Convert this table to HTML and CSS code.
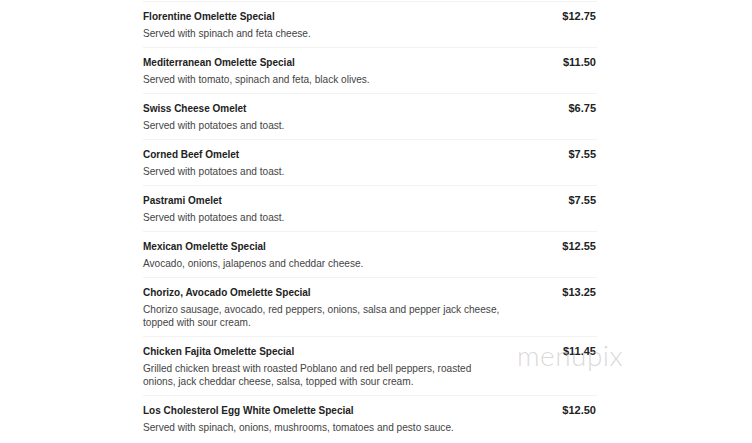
FILE: index.html
```html
<!DOCTYPE html>
<html>
<head>
<meta charset="utf-8">
<link rel="stylesheet" href="styles.css">
</head>
<body>
<div class="menu">
  <div class="item">
    <div class="row"><span class="name">Florentine Omelette Special</span><span class="price">$12.75</span></div>
    <div class="desc">Served with spinach and feta cheese.</div>
  </div>
  <div class="item">
    <div class="row"><span class="name">Mediterranean Omelette Special</span><span class="price">$11.50</span></div>
    <div class="desc">Served with tomato, spinach and feta, black olives.</div>
  </div>
  <div class="item">
    <div class="row"><span class="name">Swiss Cheese Omelet</span><span class="price">$6.75</span></div>
    <div class="desc">Served with potatoes and toast.</div>
  </div>
  <div class="item">
    <div class="row"><span class="name">Corned Beef Omelet</span><span class="price">$7.55</span></div>
    <div class="desc">Served with potatoes and toast.</div>
  </div>
  <div class="item">
    <div class="row"><span class="name">Pastrami Omelet</span><span class="price">$7.55</span></div>
    <div class="desc">Served with potatoes and toast.</div>
  </div>
  <div class="item">
    <div class="row"><span class="name">Mexican Omelette Special</span><span class="price">$12.55</span></div>
    <div class="desc">Avocado, onions, jalapenos and cheddar cheese.</div>
  </div>
  <div class="item">
    <div class="row"><span class="name">Chorizo, Avocado Omelette Special</span><span class="price">$13.25</span></div>
    <div class="desc">Chorizo sausage, avocado, red peppers, onions, salsa and pepper jack cheese,<br>topped with sour cream.</div>
  </div>
  <div class="item">
    <div class="row"><span class="name">Chicken Fajita Omelette Special</span><span class="price">$11.45</span></div>
    <div class="desc">Grilled chicken breast with roasted Poblano and red bell peppers, roasted<br>onions, jack cheddar cheese, salsa, topped with sour cream.</div>
  </div>
  <div class="item">
    <div class="row"><span class="name">Los Cholesterol Egg White Omelette Special</span><span class="price">$12.50</span></div>
    <div class="desc">Served with spinach, onions, mushrooms, tomatoes and pesto sauce.</div>
  </div>
</div>
<div class="watermark">menupix</div>
</body>
</html>
```
FILE: styles.css
```css
html, body {
  margin: 0;
  padding: 0;
  background: #fff;
}
body {
  font-family: "Liberation Sans", Arial, sans-serif;
  padding-top: 1px;
  position: relative;
  height: 443px;
  overflow: hidden;
}
.menu {
  width: 454px;
  margin-left: 143px;
}
.item {
  border-top: 1px solid #f2f2f2;
  padding: 7px 0 7px 0;
}
.row {
  display: flex;
  justify-content: space-between;
  align-items: baseline;
  line-height: 14px;
  height: 14px;
}
.name {
  font-size: 10px;
  font-weight: bold;
  color: #222;
}
.price {
  font-size: 11px;
  font-weight: bold;
  color: #222;
  padding-right: 1px;
}
.desc {
  margin-top: 4px;
  font-size: 10.1px;
  line-height: 13px;
  color: #444;
}
.watermark {
  position: absolute;
  left: 517px;
  top: 338px;
  font-family: "Lato", "DejaVu Sans", sans-serif;
  font-weight: 300;
  font-size: 28px;
  letter-spacing: 0.5px;
  color: rgba(180, 180, 180, 0.5);
  pointer-events: none;
}
```
